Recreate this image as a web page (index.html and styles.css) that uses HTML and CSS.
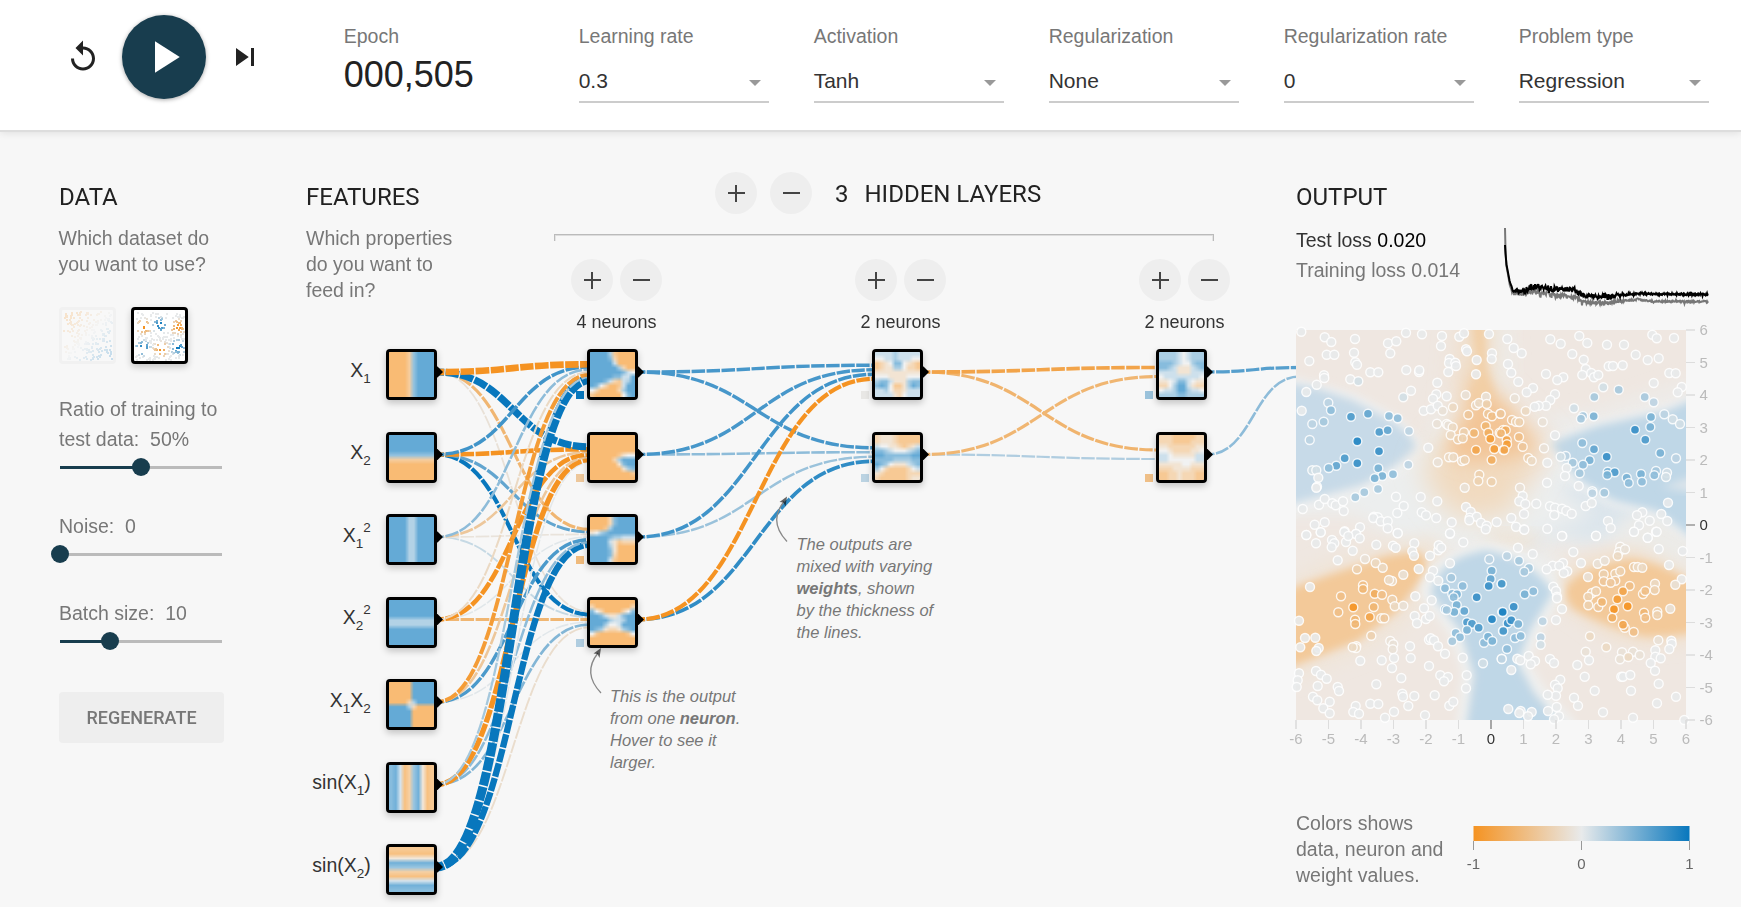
FILE: index.html
```html
<!DOCTYPE html>
<html lang="en">
<head>
<meta charset="utf-8">
<title>Neural network playground</title>
<link rel="stylesheet" href="styles.css">
</head>
<body>
<header class="top">
  <div class="timeline">
    <button class="ctl" aria-label="Reset"><svg viewBox="0 0 24 24" width="36" height="36"><path d="M12 5V1L7 6l5 5V7c3.31 0 6 2.69 6 6s-2.69 6-6 6-6-2.69-6-6H4c0 4.42 3.58 8 8 8s8-3.58 8-8-3.58-8-8-8z"/></svg></button>
    <button class="play" aria-label="Play"><svg viewBox="0 0 24 24" width="54" height="54"><path d="M8 5v14l11-7z"/></svg></button>
    <button class="ctl" aria-label="Step"><svg viewBox="0 0 24 24" width="36" height="36"><path d="M6 18l8.5-6L6 6v12zM16 6v12h2V6h-2z"/></svg></button>
  </div>
  <div class="field epoch"><span class="label">Epoch</span><span class="count">000,505</span></div>
  <div class="field"><span class="label">Learning rate</span><div class="select">0.3</div></div>
  <div class="field"><span class="label">Activation</span><div class="select">Tanh</div></div>
  <div class="field"><span class="label">Regularization</span><div class="select">None</div></div>
  <div class="field"><span class="label">Regularization rate</span><div class="select">0</div></div>
  <div class="field"><span class="label">Problem type</span><div class="select">Regression</div></div>
</header>

<div class="network" id="network">
  <svg class="wires" id="wires" width="1741" height="907"></svg>
</div>

<main class="main">
  <section class="data">
    <h3>DATA</h3>
    <p>Which dataset do<br>you want to use?</p>
    <div class="sets">
      <div class="set off"><svg id="plane" width="51" height="51"></svg></div>
      <div class="set"><svg id="gauss" width="51" height="51"></svg></div>
    </div>
    <div class="param"><div>Ratio of training to<br>test data: &nbsp;50%</div><div class="slider"><i class="fill" style="width:50%"></i><i class="knob" style="left:50%"></i></div></div>
    <div class="param"><div>Noise: &nbsp;0</div><div class="slider"><i class="knob" style="left:0%"></i></div></div>
    <div class="param"><div>Batch size: &nbsp;10</div><div class="slider"><i class="fill" style="width:31%"></i><i class="knob" style="left:31%"></i></div></div>
    <button class="regen">REGENERATE</button>
  </section>

  <section class="features">
    <h3>FEATURES</h3>
    <p>Which properties<br>do you want to<br>feed in?</p>
  </section>

  <section class="hidden-layers">
    <div class="layer-head">
      <span class="round plus"></span><span class="round minus"></span>
      <span class="num">3</span><span>HIDDEN LAYERS</span>
    </div>
    <div class="bracket"></div>
    <div class="layers">
      <div class="layer"><div class="pair"><span class="round plus"></span><span class="round minus"></span></div>4 neurons</div>
      <div class="layer"><div class="pair"><span class="round plus"></span><span class="round minus"></span></div>2 neurons</div>
      <div class="layer"><div class="pair"><span class="round plus"></span><span class="round minus"></span></div>2 neurons</div>
    </div>
  </section>

  <section class="output">
    <h3>OUTPUT</h3>
    <div class="metrics">
      <div class="losses"><div class="test">Test loss <b>0.020</b></div><div class="train">Training loss 0.014</div></div>
      <svg class="chart" id="chart" width="206" height="80"></svg>
    </div>
    <svg class="heat" id="heat" width="390" height="390" viewBox="0 0 390 390">
      <defs>
        <filter id="b4" x="-20%" y="-20%" width="140%" height="140%"><feGaussianBlur stdDeviation="4"/></filter>
        <filter id="b9" x="-40%" y="-40%" width="180%" height="180%"><feGaussianBlur stdDeviation="9"/></filter>
        <filter id="b14" x="-50%" y="-50%" width="200%" height="200%"><feGaussianBlur stdDeviation="14"/></filter>
        <clipPath id="frame"><rect width="390" height="390"/></clipPath>
      </defs>
      <g clip-path="url(#frame)">
        <rect width="390" height="390" fill="#efe7e1"/>
        <g filter="url(#b9)" fill="#eceeee">
          <path d="M-20 160L60 150L130 115L150 60L165 150L240 150L260 120L330 160L390 180L390 212L250 212L190 222L110 215L60 185L-20 185Z"/>
          <path d="M193 -10Q188 60 210 80L215 40L212 -10Z"/>
          <path d="M205 60L262 105L330 85L400 60L400 50L300 82L250 88Z"/>
          <ellipse cx="240" cy="252" rx="30" ry="30"/>
        </g>
        <path filter="url(#b9)" fill="#dbe5ec" d="M225 225L255 205L300 212L350 182L340 165L280 150L262 160L300 185L240 205Z"/>
        <path filter="url(#b9)" fill="#efe1d0" d="M180 217L200 202L245 205L235 216Z"/>
        <path filter="url(#b9)" fill="#ecebe8" d="M320 200Q350 170 395 195V250L340 220Z"/>
        <path filter="url(#b4)" fill="none" stroke="#eff0f0" stroke-width="12" d="M-10 51L56 69L99 92L122 118L106 136L66 158L-10 178M400 70L340 87L301 96L254 112L281 149L317 170L361 180L400 208"/>
        <path filter="url(#b4)" fill="#c7dae8" d="M-20 51L20 58L56 70L96 91Q118 106 120 117Q108 132 66 155L-20 178Z"/>
        <path filter="url(#b4)" fill="#bfd7e7" d="M410 64L370 81L301 96L254 113L281 148L317 170L361 181L410 218Z"/>
        <path filter="url(#b4)" fill="#dfe6eb" d="M400 146L365 157L400 162Z"/>
        <path filter="url(#b14)" fill="#f1dabf" d="M170 -20H194L196 60L252 115L225 160L215 185L165 190L138 165L126 135L160 95Z"/>
        <path filter="url(#b9)" fill="#f3c596" d="M178 40L192 60L212 78L240 118L215 128L168 132L150 120L172 84Z"/>
        <path filter="url(#b4)" fill="#f2cfa5" d="M175 -10H189L190 36L198 70L176 72L181 36Z"/>
        <path filter="url(#b9)" fill="none" stroke="#f0e4d6" stroke-width="16" d="M-10 260L35 240L90 222L135 215L137 240L105 285L68 312L-10 342"/>
        <path filter="url(#b4)" fill="#f3c999" d="M-20 264L35 244L89 226L117 221Q134 222 129 244L101 282L62 311L-20 343Z"/>
        <path filter="url(#b9)" fill="#f1e0cc" d="M257 267Q262 226 337 219Q372 228 400 255V310L350 315L310 305Z"/>
        <path filter="url(#b4)" fill="#f3c999" d="M268 262Q280 235 337 229Q372 234 410 262V300Q380 307 347 306Q305 295 276 278Z"/>
        <path filter="url(#b4)" fill="none" stroke="#eff0ef" stroke-width="16" d="M168 400L174 340L160 300L132 262Q140 228 190 220Q235 225 258 262L236 302L224 333L242 362L276 400"/>
        <path filter="url(#b4)" fill="#bfd7e7" d="M170 400L178 345L164 300L135 264Q141 228 190 220Q234 228 257 262L234 300L222 333L238 363L270 400Z"/>
      </g>
      <g id="points"></g>
      <g id="axes"></g>
    </svg>
    <div class="legend">
      <p>Colors shows<br>data, neuron and<br>weight values.</p>
      <svg width="232" height="56">
        <defs><linearGradient id="scale"><stop offset="0" stop-color="#f59322"/><stop offset=".5" stop-color="#e8eaeb"/><stop offset="1" stop-color="#0877bd"/></linearGradient></defs>
        <rect x="10.5" y="1" width="216" height="15" fill="url(#scale)"/>
        <path d="M10.5 16v9M118.5 16v9M226.5 16v9" stroke="#999" fill="none"/>
        <g class="tick" text-anchor="middle"><text x="10.5" y="43.5">-1</text><text x="118.5" y="43.5">0</text><text x="226.5" y="43.5">1</text></g>
      </svg>
    </div>
  </section>
</main>
<script src="app.js"></script>
</body>
</html>
```

FILE: styles.css
```css
* { box-sizing: border-box; }
body { margin: 0; width: 1741px; height: 907px; overflow: hidden; position: relative; background: #f7f7f7; color: #777; font: 19.5px/26px "Liberation Sans", Arial, sans-serif; }
button { border: 0; padding: 0; background: none; font: inherit; display: block; }
svg { display: block; }
p { margin: 0; }
h3 { margin: 0 0 14px; font: 400 24px/28px Roboto, sans-serif; color: #222; }

.top { height: 132px; background: #fff; border-bottom: 2px solid #ddd; box-shadow: 0 1px 8px rgba(0,0,0,.1); display: flex; gap: 45px; padding-right: 32px; }
.timeline { width: 298.7px; flex: none; height: 114px; padding-left: 64.5px; display: flex; align-items: center; }
.ctl { fill: #222; }
.play { width: 84px; height: 84px; border-radius: 50%; margin: 0 20.5px 0 21.5px; background: #183d4e; fill: #fff; padding-left: 15px; box-shadow: 0 1px 4px rgba(0,0,0,.35); }
.field { width: 190px; flex: none; padding-top: 23px; }
.label { display: block; height: 26px; white-space: nowrap; }
.count { display: block; margin-top: 6px; font-size: 36px; line-height: 40px; color: #222; }
.select { margin-top: 14px; height: 40px; border-bottom: 2px solid #ccc; color: #333; font-size: 21px; line-height: 36px; display: flex; justify-content: space-between; align-items: flex-start; }
.select::after { content: ""; margin: 17px 8px 0 0; border: 6px solid transparent; border-top-color: #999; border-bottom: 0; }

.main { position: relative; display: grid; grid-template-columns: 165px 166px 660px 1fr; column-gap: 82px; padding: 51px 32px 0 59px; }
.data p { margin-left: -.5px; }

.sets { display: flex; gap: 15px; margin: 30px 0; }
.set { width: 57px; height: 57px; border: 3px solid #000; border-radius: 4px; background: #fff; box-shadow: 0 3px 7px rgba(0,0,0,.2); }
.off { border-color: #f1f1f1; background: #f8f8f8; box-shadow: none; }
.off svg { opacity: .2; }
.param { line-height: 30px; margin-bottom: 35px; white-space: nowrap; }
.slider { position: relative; height: 18px; width: 162px; margin: 4px 0 0 1px; display: flex; align-items: center; background: linear-gradient(#bbb, #bbb) 0 50% / 100% 3px no-repeat; }
.fill { height: 3px; background: #183d4e; }
.knob { position: absolute; top: 0; width: 18px; height: 18px; margin-left: -9px; border-radius: 50%; background: #183d4e; }
.regen { margin-top: 42px; width: 165px; height: 51px; border-radius: 4px; background: #eee; color: #777; font: 500 18px Roboto, sans-serif; }

.round { width: 42px; height: 42px; border-radius: 50%; flex: none; }
.plus { background: linear-gradient(#444, #444) 50% 50% / 17px 2px no-repeat, linear-gradient(#444, #444) 50% 50% / 2px 17px no-repeat, #eee; }
.minus { background: linear-gradient(#444, #444) 50% 50% / 17px 2px no-repeat, #eee; }
.layer-head { display: flex; align-items: center; margin: -11px 0 20px 161px; height: 42px; gap: 13px; font: 24px/28px Roboto, sans-serif; color: #222; }
.num { margin-left: 10px; margin-right: 3px; }
.layer-head span:not(.round) { padding-top: 1px; }
.bracket { height: 7px; border: 1px solid #bbb; border-bottom: 0; box-shadow: inset 0 1px #ddd, inset 1px 0 #e4e4e4, inset -1px 0 #e4e4e4; }
.layers { display: flex; gap: 193px; margin: 18px 0 0 17px; }
.layer { flex: none; width: 91px; text-align: center; font-size: 18px; line-height: 22px; color: #333; }
.pair { display: flex; justify-content: space-between; margin-bottom: 10px; }

.metrics { display: flex; justify-content: space-between; height: 105px; line-height: 30px; white-space: nowrap; }
.test { color: #333; }
.test b { font-weight: 400; color: #000; }
.chart { margin-top: 3px; overflow: visible; }
.heat { overflow: visible; }
.tick { font-size: 15px; fill: #666; }
.legend { display: flex; margin-top: 90px; }
.legend p { width: 167px; white-space: nowrap; }
.legend svg { margin-top: 15px; }

.network { position: absolute; inset: 0; }
.wires { position: absolute; left: 0; top: 0; }
.node { position: absolute; width: 51px; height: 51px; border: 3px solid #000; border-radius: 4px; background: #fff; box-shadow: 0 3px 7px rgba(0,0,0,.22); overflow: hidden; }
.node canvas { display: block; width: 45px; height: 45px; }
.name { font-size: 19.5px; fill: #333; text-anchor: end; }
.small { font-size: 13.5px; }
.note { font-size: 16.5px; font-style: italic; fill: #777; }
.note .strong { font-weight: 700; }
```

FILE: app.js
```js
const NS = 'http://www.w3.org/2000/svg';
const byId = id => document.getElementById(id);
function add(parent, tag, attrs, text) {
  const el = document.createElementNS(NS, tag);
  for (const k in attrs) el.setAttribute(k, attrs[k]);
  if (text !== undefined) el.textContent = text;
  parent.appendChild(el);
  return el;
}
let seed = 90210;
function rnd() {
  seed = (seed + 0x6D2B79F5) | 0;
  let t = Math.imul(seed ^ (seed >>> 15), 1 | seed);
  t = (t + Math.imul(t ^ (t >>> 7), 61 | t)) ^ t;
  return ((t ^ (t >>> 14)) >>> 0) / 4294967296;
}

const NEG = [245, 147, 34], MID = [232, 234, 235], POS = [8, 119, 189];
function rgb(v) {
  const t = Math.min(1, Math.abs(v)), end = v < 0 ? NEG : POS;
  return MID.map((m, i) => Math.round(m + (end[i] - m) * t));
}
const css = v => 'rgb(' + rgb(v).join(',') + ')';

// links between layers
const wires = byId('wires');
const rowY = i => 372 + 82.5 * i;
const layerX = [411.5, 612.5, 897.5, 1181.5];
const weights = [
  [[-1.9, .75, .4, -.2, -.9, .3, 2.8], [2.1, -1.15, -.4, -1.15, -.4, -1.4, .02], [-.6, .6, -.08, .03, .7, .4, 1.8], [-.1, 1, .15, -.6, .03, .45, -.15]],
  [[.72, .72, .75, -1], [.72, .4, .35, .82]],
  [[-.8, -.6], [-.62, .25]]
];
const links = [];
function link(x0, y0, x1, y1, w) {
  const m = (x0 + x1) / 2;
  links.push({ d: `M${x0},${y0}C${m},${y0} ${m},${y1} ${x1},${y1}`, w });
}
weights.forEach((layer, l) => layer.forEach((ins, j) => ins.forEach((w, i) => {
  const off = (i - (ins.length - 1) / 2) / ins.length * 18;
  link(layerX[l] + 25, rowY(i), layerX[l + 1] - 23, rowY(j) + off, w);
})));
link(1207, rowY(0), 1300, rowY(0) - 4.5, .65);
link(1207, rowY(1), 1300, rowY(0) + 4.5, .4);
links.reverse().forEach(l => add(wires, 'path', {
  d: l.d, fill: 'none', stroke: css(l.w), 'stroke-width': 1.5 * (1 + 9 * Math.abs(l.w) / 5),
  'stroke-dasharray': '13.5 1.5', 'stroke-dashoffset': 6
}));

// bias squares
[[576, 0, 1], [576, 1, -.4], [576, 2, -.55], [576, 3, .25], [861, 0, -.03], [861, 1, .2], [1145, 0, .35], [1145, 1, -.5]]
  .forEach(([x, i, v]) => add(wires, 'rect', { x, y: Math.round(rowY(i) + 19), width: 8, height: 8, fill: css(v) }));

// node thumbnails
const s = i => -6 + 12 * i / 9;
const wave = [.75, .9, .2, -.9, -.62, .62, .9, -.2, -.9, -.75];
const fn = [k => s(k), (k, r) => -s(r), k => s(k) ** 2, (k, r) => s(r) ** 2, (k, r) => -s(k) * s(r), k => wave[k], (k, r) => wave[9 - r]];
const maps = [
  ['8888610000','8888720000','8888850000','8888886200','8888888754','8888877558','8887521568','8742001588','4200002688','1000000478'],
  ['0000000000','0000000000','0000000000','0000000000','0000001344','0000026888','0000003788','0000000367','0000000001','0000000000'],
  ['0000278888','0000278888','0001688888','3467888888','8888766555','8888531222','8888630000','8888730000','8888720000','8888510000'],
  ['0000000000','2000000002','7420000247','8875335788','8888655688','8886445888','8763223678','4100000014','0000000000','0000000000'],
  ['5555655555','4455655544','1234774321','1233664221','3333333333','4443333444','6775333677','7874113687','5564223555','5555324555'],
  ['2333211111','2333211111','5443321235','7765444567','8877777788','7777666677','8764333567','6421111245','3211111222','2111111233'],
  ['6666545666','6666545666','7776544677','7765333567','5555333555','4555555554','3345775433','2246885322','4556886554','6666776666'],
  ['2221111122','2221111222','3322222233','4432222334','5543333355','5544444455','3333344333','2223333222','1122322211','1122322211']
];
function node(cx, i, value) {
  const box = document.createElement('div');
  box.className = 'node';
  box.style.left = cx - 25.5 + 'px';
  box.style.top = Math.floor(349.5 + 82.5 * i) + 'px';
  const c = document.createElement('canvas');
  c.width = c.height = 10;
  const ctx = c.getContext('2d'), img = ctx.createImageData(10, 10);
  for (let r = 0; r < 10; r++) for (let k = 0; k < 10; k++) {
    img.data.set([...rgb(value(k, r)), 160], (r * 10 + k) * 4);
  }
  ctx.putImageData(img, 0, 0);
  box.appendChild(c);
  byId('network').appendChild(box);
  add(wires, 'path', { d: `M${cx + 22} ${rowY(i) - 5.5}h4l5.5 5.5l-5.5 5.5h-4z`, fill: '#000' });
}
fn.forEach((f, i) => node(411.5, i, f));
maps.forEach((m, n) => {
  const l = n < 4 ? 1 : n < 6 ? 2 : 3, i = n < 4 ? n : n % 2;
  node(layerX[l], i, (k, r) => (m[r][k] - 4) / 4);
});

// feature names: '_' marks a subscript, '^' a superscript
['X_1', 'X_2', 'X_1^2', 'X_2^2', 'X_1X_2', 'sin(X_1)', 'sin(X_2)'].forEach((name, i) => {
  const t = add(wires, 'text', { class: 'name', x: 370.8, y: Math.floor(rowY(i) + 5) });
  let at = 0;
  name.match(/[_^]\d|[^_^]+/g).forEach(part => {
    const to = part[0] === '_' ? 6 : part[0] === '^' ? -10 : 0;
    add(t, 'tspan', { dy: to - at, class: to ? 'small' : '' }, to ? part[1] : part);
    at = to;
  });
});

// callouts
function note(x, y, lines) {
  lines.forEach((line, i) => {
    const t = add(wires, 'text', { class: 'note', x, y: y + 22 * i });
    line.split('*').forEach((p, k) => p && add(t, 'tspan', { class: k % 2 ? 'strong' : '' }, p));
  });
}
note(796.5, 550, ['The outputs are', 'mixed with varying', '*weights*, shown', 'by the thickness of', 'the lines.']);
note(610, 702, ['This is the output', 'from one *neuron*.', 'Hover to see it', 'larger.']);
[[787, 541.5], [601, 693]].forEach(([x, y]) => {
  add(wires, 'path', { d: `M${x} ${y}Q${x - 19} ${y - 20} ${x - 3} ${y - 40}`, fill: 'none', stroke: '#888', 'stroke-width': 1.3 });
  add(wires, 'path', { d: `M${x} ${y - 45}l-7.5 5.5l4 .5l2 4z`, fill: '#000', 'fill-opacity': .6 });
});

// dataset thumbnails
function dot(svg, x, y, v) {
  add(svg, 'rect', { x: Math.round(x), y: Math.round(y), width: 2, height: 2, fill: css(v) });
}
for (let i = 0; i < 210; i++) {
  const x = rnd() * 48 + 1, y = rnd() * 48 + 1;
  dot(byId('plane'), x, y, ((x + y) - 50) / 40);
}
const bumps = [[9, 16, -1], [25, 14, 1], [43, 16, -1], [8, 37, 1], [26, 38, -1], [43, 36, 1]];
for (let i = 0; i < 230; i++) {
  const x = rnd() * 48 + 1, y = rnd() * 48 + 1;
  let v = 0;
  bumps.forEach(([a, b, w]) => { const t = 1 - Math.hypot(x - a, y - b) / 9; if (t > 0) v = w * t * 1.15; });
  dot(byId('gauss'), x, y, v);
}

// loss curves
function curve(color, pts, amp) {
  let d = 'M' + pts[0];
  for (let i = 1; i < pts.length; i++) {
    const [x0, y0] = pts[i - 1], [x1, y1] = pts[i];
    for (let x = x0 + .5; x < x1; x += .5) {
      const a = x > 78 ? (x > 120 ? amp * .4 : amp * .8) : amp;
      const n = x < 9 ? 0 : (rnd() - .5) * a + (rnd() > .93 ? (rnd() - .4) * a * 1.6 : 0);
      d += `L${x.toFixed(1)} ${(y0 + (y1 - y0) * (x - x0) / (x1 - x0) + n).toFixed(1)}`;
    }
  }
  add(byId('chart'), 'path', { d, fill: 'none', stroke: color, 'stroke-width': 2 });
}
curve('#777', [[2, 0], [2.8, 34], [7, 58], [10, 65], [20, 66], [30, 63], [45, 66], [62, 68], [74, 69], [78, 74], [100, 75], [118, 73], [135, 71.5], [150, 73.3], [206, 73.7]], 4);
curve('#000', [[2, 17], [3, 34], [7, 55], [11, 63], [22, 62], [30, 58.5], [43, 60], [62, 62], [71, 61], [79, 67], [98, 68.5], [118, 67], [135, 65.5], [150, 66], [206, 66.3]], 5.5);

// samples, one group per quadrant: x,y[,value*10] in thirds of a pixel from the group's origin
const samples = [
  [-11, -10, '49,35 119,52 139,66 210,57 125,104 148,104 207,98 211,127 216,134 73,123 117,166 118,174 95,194 196,178 220,184,1 64,216 50,272 130,248,2 138,271,4 82,312,2 116,305,3 74,360,2 198,290,7 249,281,6 217,364,9 312,288,4 338,295,4 283,336,7 308,331,6 372,333,2 282,394,8 217,430,8 179,415,7 154,437,6 131,444,4 280,445,5 370,434,2 324,463,4 292,468,5 269,475,5 279,507,3 238,517,3 211,532,3 82,451,1 94,451,1 100,473 96,500 94,503 53,567 102,554 119,537 142,550 152,556 174,544 176,573 89,614 119,607 107,637 64,645 225,622 213,641 179,634 256,157 280,157 309,70 334,64 316,100 363,38 411,43 364,150 402,156 403,151 378,212 355,232,1 430,383 471,48 468,78 523,50 537,40 543,88 546,94 612,42 494,117 492,129 511,128 513,138 490,156 457,188 575,120 573,163 621,100 620,117 454,223 485,229 444,236 416,272 438,268 458,257 473,272,-1 504,262,-2 542,225,-1 603,230,-1 573,256,-2 582,249,-2 605,252,-3 550,284,-4 609,281,-4 621,289,-5 646,281,-4 456,311,-1 485,312,-1 490,316,-1 503,322,-2 537,337,-3 497,345,-2 519,358,-3 533,355,-3 567,339,-6 602,318,-6 610,338,-7 616,356,-9 644,338,-7 655,330,-7 573,390,-8 628,387,-9 620,420,-7 655,390,-7 492,412,-2 505,412,-2 458,427,-1 531,423,-2 539,420,-3 583,464,-3 580,483,-3 620,485,-3 539,503,-1 333,530 356,558 337,579 407,531 457,544 410,577 423,586 454,594 500,607 495,641 543,561 557,575 554,593 575,590 553,601 588,608 605,617 602,628 635,606 267,590 278,592 265,594 287,604 308,604 308,625 338,639'],
  [204, -10, '22,57 41,84 65,100 151,58 182,71 238,48 262,69 321,74 372,74 217,102 251,119 457,44 470,55 522,54 407,104 443,120 476,115 24,132 34,158 55,185 138,162 190,172 172,180 99,204 80,217 44,235,-1 257,147 247,165 274,159 282,172 295,165 326,139 339,138 368,136 508,159 527,160 461,189 545,201 533,217 310,202,1 356,209,3 283,231,3 434,231,3 461,247,2 165,223 151,240 138,257 116,257 104,260 77,273,-2 128,306,-1 222,265,1 249,288,3 243,296,3 281,289,5 453,291,5 493,283,2 518,298,1 540,312,1 451,321,5 405,329,8 436,359,7 2,281,-4 36,300,-4 48,305,-3 58,306,-3 17,331,-7 3,340,-6 57,351,-5 68,380,-4 20,360,-8 21,373,-9 13,390,-8 85,414,-3 95,422,-2 132,385,-1 142,428 165,346 247,369,4 282,388,6 320,410,8 481,399,5 528,415,2 269,421,5 249,434,4 218,428,3 197,408,2 182,410,1 200,444 195,468 239,460,3 323,455,5 344,457,7 322,465,5 380,473,5 386,489,4 423,462,5 426,485,4 468,453,3 463,466,4 501,458,1 498,471,1 236,498 277,514,1 277,520,2 313,518,3 141,488 60,503,-1 68,528 58,544 76,552 109,551 72,582 34,594 48,620 72,628 142,626 150,559 165,563 186,566 163,585 199,572 215,581 257,558 275,549 324,603 332,624 187,648 288,648 504,548 427,577 411,586 484,582 449,602 502,603 417,616 402,635 468,635 443,653'],
  [-11, 200, '64,15 93,40 107,7 141,30 148,40 140,52 183,36 178,6 213,12 224,25 190,18 203,62 274,44 338,10 324,47 332,53 388,40 382,64 387,77 435,77 460,61 461,46 469,53 495,10 535,37 495,100 401,117 444,122 435,142 460,152 158,91 240,87,-1 272,99,-2 293,113,-2 216,118,-3 75,171 321,153,-2 312,150,-2 355,134,-1 234,166,-5 234,177,-6 168,199,-5 269,191,-7 291,194,-5 205,232,-10 160,247,-5 266,231,-6 322,209,-3 329,229,-2 355,227,-1 254,261,-8 210,269,-6 211,282,-6 289,265,-3 298,265,-4 391,199 42,272 91,323 60,324 46,352 101,354 94,363 259,317,-3 214,349,-2 213,354,-2 203,352,-2 316,333,-1 325,343,-1 323,358,-1 327,384 226,392 290,391 375,349 377,384 321,414 349,444 389,258 396,280 417,235 423,267 434,258 440,211 432,329 437,325 447,331 459,349 480,371 93,423 108,434 125,446 42,430 38,451 35,471 98,468 158,471 162,483 84,500 97,511 134,515 115,535 134,550 212,528 205,546 222,551 256,521 280,522 274,463 300,563 327,545 352,491 354,500 388,498 370,528 420,556 432,408 449,496 466,436 489,441 477,454 493,527 505,515 613,88,2 620,122,5 617,147,6 611,168,8 650,162,7 499,143,3 480,175,4 502,191,4 516,193,5 506,202,4 533,168,4 575,202,8 515,225,5 508,246,5 538,243,6 480,238,4 485,240,3 621,268,9 652,246,8 546,277,7 561,281,7 546,300,5 581,293,7 512,309,4 525,322,4 502,334,3 597,338,4 609,320,5 622,333,5 654,303,7 594,400,1 533,383 650,386,1 545,436 543,475'],
  [204, 200, '73,-1 186,18 288,17 402,5 443,23 470,5 54,53 98,72 220,66 243,99 476,57 548,63 507,105 545,148 526,164,-1 21,78,2 57,92,3 87,114,3 73,125,3 189,99 158,107 178,107 140,118 202,124 191,129 264,141,-1 293,101,-1 314,92,-1 361,50,-1 357,66,-1 375,58,-1 353,78,-2 402,111,-3 413,111,-2 427,113,-2 346,131,-3 361,124,-3 311,133,-3 311,154,-4 346,152,-4 332,158,-4 389,168,-5 465,161,-2 464,180,-3 369,184,-8 276,189,-3 288,184,-3 265,200,-3 265,226,-3 295,231,-4 306,216,-6 352,208,-9 429,192,-5 436,183,-5 342,238,-10 383,229,-10 337,263,-7 432,248,-6 436,263,-5 472,245,-3 472,255,-3 511,236,-1 374,293,-5 369,284,-8 401,306,-5 5,161,7 74,193,5 100,184,4 8,246,9 41,230,8 23,280,8 34,271,8 55,282,5 10,303,7 45,324,4 62,318,4 21,357,4 128,274,2 122,322,2 122,344,1 5,387,2 160,170 168,183 171,200 171,205 186,237 168,270 270,319,-2 319,352,-2 257,365,-1 267,391 232,405 254,440 366,367,-1 399,365,-1 360,388,-1 385,381,-2 419,375,-1 475,331,-1 514,332 515,341 508,357 466,361 466,380 482,385 452,399 465,422 52,386 61,391 86,378 105,393 92,403 150,387 162,399 34,420 181,449 165,464 173,475 168,497 143,494 170,531 144,543 177,559 162,568 222,503 234,527 309,547 284,482 364,440 369,440 391,435 393,482 476,461 471,520 528,500 399,563 553,570 25,537 62,543 58,549 95,546 84,559']
];
samples.forEach(([ox, oy, list]) => list.split(' ').forEach(p => {
  const [x, y, v] = p.split(',').map(Number);
  add(byId('points'), 'circle', { cx: (ox + x / 3).toFixed(1), cy: (oy + y / 3).toFixed(1), r: 4.5, fill: css((v || 0) / 10), 'fill-opacity': .9, stroke: '#fff', 'stroke-opacity': .85, 'stroke-width': 1.4 });
}));

// axes of the output map
const axes = byId('axes');
for (let v = -6; v <= 6; v++) {
  const p = 195 + 32.5 * v, q = 195 - 32.5 * v, line = v ? '#ddd' : '#999', ink = v ? '#bbb' : '#333', sw = v % 2 ? 1 : 1.7;
  add(axes, 'path', { d: `M${p} 390v9M390 ${q}h9`, stroke: line, 'stroke-width': sw });
  add(axes, 'text', { x: p, y: 413.5, 'text-anchor': 'middle', 'font-size': 15, fill: ink }, v);
  add(axes, 'text', { x: 403.5, y: q + 5, 'font-size': 15, fill: ink }, v);
}
```
